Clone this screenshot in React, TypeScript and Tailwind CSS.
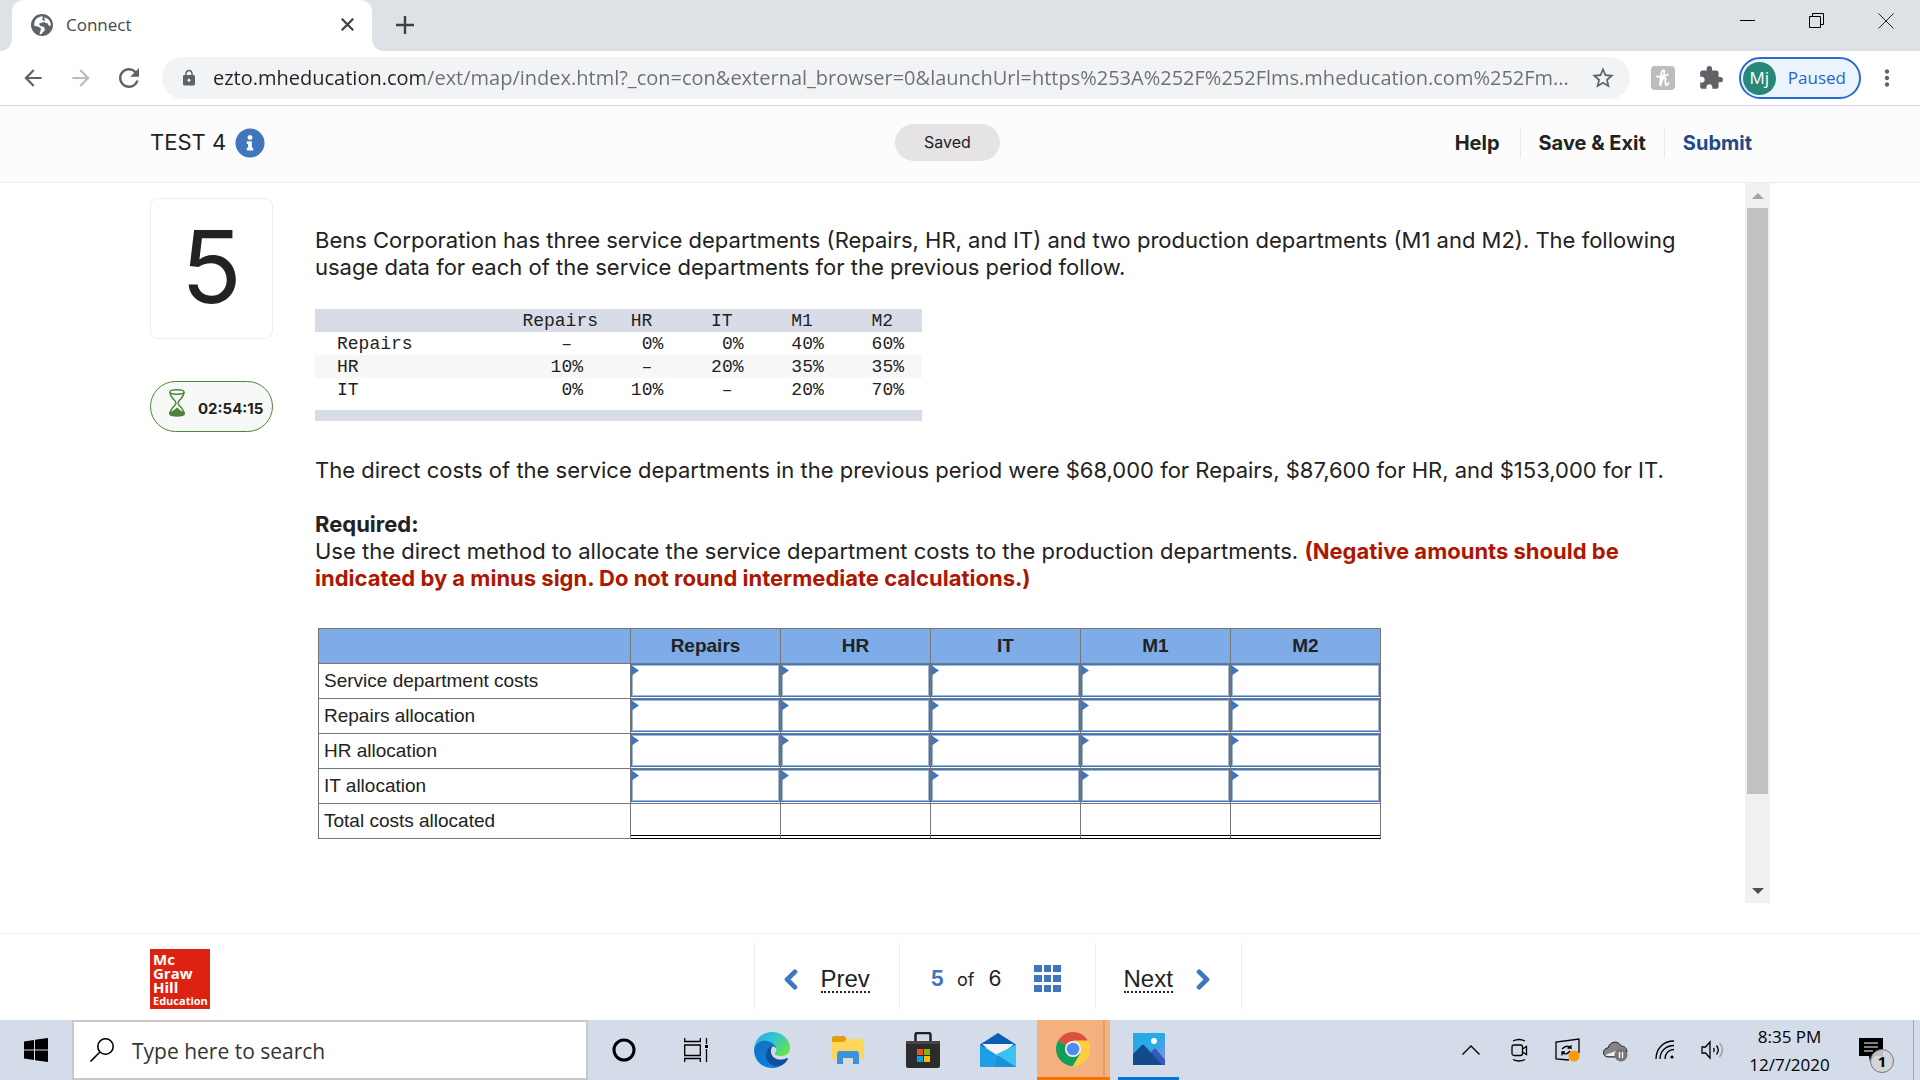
import React from 'react';
import { FaChevronLeft, FaChevronRight, FaInfoCircle } from 'react-icons/fa';
import {
  MdArrowBack,
  MdArrowForward,
  MdExtension,
  MdLock,
  MdMoreVert,
  MdRefresh,
  MdStarBorder,
} from 'react-icons/md';

const URL_TEXT =
  'ezto.mheducation.com/ext/map/index.html?_con=con&external_browser=0&launchUrl=https%253A%252F%252Flms.mheducation.com%252Fm...';

const DEPARTMENTS = ['Repairs', 'HR', 'IT', 'M1', 'M2'];

const USAGE = [
  { name: 'Repairs', values: ['–', '0%', '0%', '40%', '60%'] },
  { name: 'HR', values: ['10%', '–', '20%', '35%', '35%'] },
  { name: 'IT', values: ['0%', '10%', '–', '20%', '70%'] },
];

const ANSWER_ROWS = ['Service department costs', 'Repairs allocation', 'HR allocation', 'IT allocation'];

const TabStrip: React.FC = () => (
  <div className="flex h-[51px] items-stretch bg-[#dee1e6]">
    <div className="w-3 bg-white">
      <div className="h-full rounded-br-xl bg-[#dee1e6]" />
    </div>
    <div className="bg-[#dee1e6]">
      <div className="flex h-full w-[360px] items-center rounded-t-xl bg-white pr-[18px] pb-[2px] pl-[19px]">
        <svg className="h-[22px] w-[22px]" viewBox="0 0 22 22">
          <circle cx="11" cy="11" r="11" fill="#5f6368" />
          <path
            d="M12 2.5C8 2 4.500 4.500 3.500 8L3 11.500l5 1.500 2 1.500-.5 2.500-1 3 2 .3c1-2.500 3-2.600 3.500-4.800l-1-2.500-4-1.200-1-2 2-1 3-.5-.5-2-1.500-.8z"
            fill="#fff"
          />
          <path d="M12.500 3.200l1.500 2-1 2.300 1.500 1.500 2 .3 1.500 2.700 1.800-.4c.4-3.700-2.300-7.800-7.300-8.400z" fill="#fff" />
        </svg>
        <span className="ml-[13px] flex-1 font-['Open_Sans','Noto_Sans',sans-serif] text-[17px] text-[#45494d]">Connect</span>
        <button aria-label="Close tab">
          <svg className="h-[13px] w-[13px]" viewBox="0 0 13 13" stroke="#3c4043" strokeWidth="2.200">
            <path d="M.8.8l11.400 11.400M12.200.8L.8 12.200" />
          </svg>
        </button>
      </div>
    </div>
    <div className="flex flex-1 bg-white">
      <div className="flex flex-1 items-center justify-between rounded-bl-xl bg-[#dee1e6] pb-[2px]">
        <button aria-label="New tab" className="ml-6">
          <svg className="h-[18px] w-[18px]" viewBox="0 0 18 18" stroke="#3c4043" strokeWidth="2.4">
            <path d="M9 0v18M0 9h18" />
          </svg>
        </button>
        <div className="mr-[26px] mb-2 flex items-center gap-[53px]">
          <button aria-label="Minimize">
            <svg className="h-4 w-4" viewBox="0 0 16 16">
              <path d="M0 7.500h15" stroke="#000" />
            </svg>
          </button>
          <button aria-label="Restore">
            <svg className="h-4 w-4" viewBox="0 0 16 16" fill="none" stroke="#000">
              <path d="M.5 3.500h11v11H.5zM3.500 3.500v-3h11v11h-3" />
            </svg>
          </button>
          <button aria-label="Close window">
            <svg className="h-4 w-4" viewBox="0 0 16 16" stroke="#222">
              <path d="M.5.5l15 15M15.500.5l-15 15" />
            </svg>
          </button>
        </div>
      </div>
    </div>
  </div>
);

const AddressBar: React.FC = () => (
  <div className="flex h-[55px] items-center border-b border-[#d5d7da] bg-white pr-[20px] pl-[20px] text-[#5f6368]">
    <button aria-label="Back" className="mr-[22px]">
      <MdArrowBack className="h-[26px] w-[26px]" />
    </button>
    <button aria-label="Forward" className="mr-[20px] text-[#babcbe]">
      <MdArrowForward className="h-[26px] w-[26px]" />
    </button>
    <button aria-label="Reload" className="mr-[18px]">
      <MdRefresh className="h-[30px] w-[30px]" />
    </button>
    <label className="flex h-[42px] flex-1 items-center rounded-full bg-[#f1f3f4] pr-[14px] pl-[18px]">
      <MdLock className="h-[18px] w-[18px]" />
      <input
        aria-label="Address"
        defaultValue={URL_TEXT}
        className="ml-[15px] flex-1 bg-[linear-gradient(to_right,#202124_211px,#6b6e72_211px)] bg-clip-text font-['Open_Sans','Noto_Sans',sans-serif] text-[20px] text-transparent outline-none"
      />
      <MdStarBorder className="h-[26px] w-[26px]" />
    </label>
    <button
      aria-label="Extension"
      className="ml-[21px] flex h-6 w-6 items-center justify-center rounded bg-[#bdbdbd]"
    >
      <svg className="h-5 w-5" viewBox="0 0 20 20" fill="none" stroke="#fff" strokeWidth="1.800" strokeLinecap="round">
        <path d="M7.500 17.500C8.500 12 11.500 8 11.500 3.500c0-2-2.500-1.500-3 1L7 16M4 8.500c3 .5 8 0 11-2M8 13c.5-2 4-4.500 4.500-2.500.3 2-1 6.500 1 6.500 1.200 0 1.800-1 2-2" />
      </svg>
    </button>
    <button aria-label="Extensions" className="ml-[23px]">
      <MdExtension className="h-[26px] w-[26px]" />
    </button>
    <button className="ml-[15px] flex h-[42px] items-center rounded-full border-2 border-[#2a6bd4] bg-[#ebf3fc] pr-[13px] pl-[2px] font-['Open_Sans','Noto_Sans',sans-serif] text-[17px] text-[#2a62cf]">
      <span className="mr-3 flex h-[33px] w-[33px] items-center justify-center rounded-full bg-[#27887a] text-white">
        Mj
      </span>
      Paused
    </button>
    <button aria-label="Menu" className="ml-[13px]">
      <MdMoreVert className="h-[26px] w-[26px]" />
    </button>
  </div>
);

const AppHeader: React.FC = () => (
  <header className="grid h-[77px] grid-cols-[1fr_auto_1fr] items-center border-b border-[#ececec] bg-[#fcfcfc] px-[150px] pb-[3px]">
    <div className="flex items-center gap-[9px]">
      <h1 className="text-[22px]">TEST 4</h1>
      <button aria-label="Test information">
        <FaInfoCircle className="h-[30px] w-[30px] text-[#3f76bd]" />
      </button>
    </div>
    <span className="mr-[25px] rounded-full bg-[#e5e3e6] px-[29px] py-[7px] text-[16px] leading-[23px]">Saved</span>
    <nav className="flex items-center justify-end pr-[18px] text-[20px] leading-[30px] font-bold">
      <button className="pr-5">Help</button>
      <button className="border-l border-[#e8e8e8] px-[18px]">Save &amp; Exit</button>
      <button className="border-l border-[#e8e8e8] pl-[18px] text-[#1c4b87]">Submit</button>
    </nav>
  </header>
);

const QuestionSidebar: React.FC = () => (
  <aside className="w-[123px] shrink-0 pt-[15px]">
    <div className="flex h-[141px] items-center justify-center rounded-lg border border-[#ededed] pb-1 text-[100px]">5</div>
    <div className="mt-[42px] flex h-[51px] items-center rounded-full border border-[#4f8339] bg-[#f7f9f6] pl-[18px]">
      <svg className="mt-[7px] h-[28px] w-4 self-start" viewBox="0 0 16 28" fill="none" stroke="#4f8339" strokeWidth="1.500">
        <ellipse cx="8" cy="3" rx="7" ry="2.200" />
        <path d="M1 3c0 6 6 8 6 11s-6 5-6 11M15 3c0 6-6 8-6 11s6 5 6 11" />
        <path d="M1 23.500c3-.5 5-2 7-4 2 2 4 3.500 7 4v2c-2 2-12 2-14 0z" fill="#4f8339" />
      </svg>
      <span className="mt-[6px] ml-[13px] text-[15px] font-bold">02:54:15</span>
    </div>
  </aside>
);

const UsageTable: React.FC = () => (
  <div className="mt-7 w-[607px] font-['Liberation_Mono',monospace] text-[18px] leading-[21px]">
    <table className="w-full table-fixed border-collapse">
      <thead>
        <tr className="bg-[#d8dce7]">
          <th aria-label="Department" className="w-[200px]" />
          {DEPARTMENTS.map((name) => (
            <th
              key={name}
              className={`p-0 pt-[2px] text-right font-normal ${name === 'Repairs' ? 'w-[86px] pr-[3px]' : 'pr-[29px]'}`}
            >
              {name}
            </th>
          ))}
        </tr>
      </thead>
      <tbody>
        {USAGE.map((row) => (
          <tr key={row.name} className="even:bg-[#f7f7f7]">
            <th className="p-0 pt-[2px] pl-[22px] text-left font-normal">{row.name}</th>
            {row.values.map((value, i) => (
              <td key={i} className={`p-0 pt-[2px] text-right ${value === '–' ? 'pr-[29px]' : 'pr-[18px]'}`}>
                {value}
              </td>
            ))}
          </tr>
        ))}
      </tbody>
    </table>
    <div className="mt-[9px] h-[11px] bg-[#d8dce7]" />
  </div>
);

const AnswerTable: React.FC = () => (
  <table className="mt-9 ml-[3px] table-fixed border-collapse font-['Liberation_Sans',Arial,sans-serif] text-[19px] leading-[23px]">
    <thead>
      <tr className="h-[35px] bg-[#7dace8]">
        <th aria-label="Line item" className="w-[312px] border border-[#767676]" />
        {DEPARTMENTS.map((name) => (
          <th key={name} className="w-[150px] border border-[#767676] p-0 pb-[2px] font-bold">
            {name}
          </th>
        ))}
      </tr>
    </thead>
    <tbody>
      {ANSWER_ROWS.map((label) => (
        <tr key={label} className="h-[35px]">
          <th className="border border-[#767676] p-0 pb-[2px] pl-[5px] text-left font-normal">{label}</th>
          {DEPARTMENTS.map((name) => (
            <td key={name} className="border border-[#767676] p-0">
              <div className="relative mb-px h-[33px]">
                <input
                  aria-label={`${label}, ${name}`}
                  className="block h-full w-full border border-[#3f76bd] bg-white px-2 text-right ring-1 ring-[#9bb9df] outline-none ring-inset"
                />
                <svg className="absolute top-px left-0 h-[11px] w-[8px]" viewBox="0 0 8 11">
                  <path d="M0 0l8 5.500L0 11z" fill="#3f76bd" />
                </svg>
              </div>
            </td>
          ))}
        </tr>
      ))}
      <tr className="h-[35px]">
        <th className="border border-[#767676] p-0 pb-[2px] pl-[5px] text-left font-normal">Total costs allocated</th>
        {DEPARTMENTS.map((name) => (
          <td key={name} className="border border-t-black border-r-[#767676] border-b-black border-l-[#767676] p-0">
            <div className="mb-[2px] h-[32px] border-b border-black" />
          </td>
        ))}
      </tr>
    </tbody>
  </table>
);

const ScrollBar: React.FC = () => (
  <div className="flex w-[25px] shrink-0 flex-col bg-[#f1f1f1]">
    <button aria-label="Scroll up" className="flex h-[25px] items-center justify-center">
      <svg className="h-[6px] w-3" viewBox="0 0 12 6">
        <path d="M6 0l6 6H0z" fill="#a3a3a3" />
      </svg>
    </button>
    <div className="flex-1 px-[2px]">
      <div className="h-7/8 bg-[#c1c1c1]" />
    </div>
    <button aria-label="Scroll down" className="flex h-[25px] items-center justify-center">
      <svg className="h-[6px] w-3" viewBox="0 0 12 6">
        <path d="M0 0h12L6 6z" fill="#505050" />
      </svg>
    </button>
  </div>
);

const Question: React.FC = () => (
  <main className="mb-[30px] flex flex-1 px-[150px]">
    <QuestionSidebar />
    <section className="ml-[42px] flex-1 pt-[44px] text-[22px] leading-[27px]">
      <p className="pr-7">
        Bens Corporation has three service departments (Repairs, HR, and IT) and two production departments (M1 and M2). The
        following usage data for each of the service departments for the previous period follow.
      </p>
      <UsageTable />
      <p className="mt-9 pr-7">
        The direct costs of the service departments in the previous period were $68,000 for Repairs, $87,600 for HR, and
        $153,000 for IT.
      </p>
      <h2 className="mt-[27px] font-bold">Required:</h2>
      <p className="pr-7">
        Use the direct method to allocate the service department costs to the production departments.{' '}
        <strong className="font-bold text-[#ad1700]">
          (Negative amounts should be indicated by a minus sign. Do not round intermediate calculations.)
        </strong>
      </p>
      <AnswerTable />
    </section>
    <ScrollBar />
  </main>
);

const AppFooter: React.FC = () => (
  <footer className="grid h-[87px] grid-cols-[1fr_auto_1fr] items-center border-t border-[#efefef] px-[150px]">
    <div className="mt-1 flex h-[60px] w-[60px] flex-col bg-[#dc2210] pt-[3px] pl-[3px] font-['Open_Sans',sans-serif] text-[15px] leading-[14px] font-bold text-white">
      <span>Mc</span>
      <span>Graw</span>
      <span>Hill</span>
      <span className="text-[11px]">Education</span>
    </div>
    <div className="mb-[2px] ml-[75px] flex h-[66px] items-stretch divide-x divide-[#ededed] border-x border-[#ededed] font-['Liberation_Sans',Arial,sans-serif] text-[24px]">
      <a href="#prev" className="flex w-[145px] items-center pt-[7px] pl-[27px]">
        <FaChevronLeft className="h-[23px] w-[18px] text-[#3f76bd]" stroke="currentColor" strokeWidth="24" />
        <span className="ml-[21px] border-b-2 border-dotted border-[#222] leading-[24px]">Prev</span>
      </a>
      <div className="flex w-[196px] items-center pt-[6px] pl-[31px] font-['Inter',sans-serif] text-[21px]">
        <span className="font-bold text-[#3f76bd]">5</span>
        <span className="ml-[13px] text-[18px]">of</span>
        <span className="ml-[14px]">6</span>
        <button aria-label="Question list" className="mb-[2px] ml-[33px]">
          <svg className="h-[27px] w-[27px]" viewBox="0 0 27 27" fill="#3f76bd">
            <path d="M0 0h8v7H0zM10 0h7v7h-7zM19 0h8v7h-8zM0 10h8v7H0zM10 10h7v7h-7zM19 10h8v7h-8zM0 20h8v7H0zM10 20h7v7h-7zM19 20h8v7h-8z" />
          </svg>
        </button>
      </div>
      <a href="#next" className="flex w-[145px] items-center pt-[7px] pl-[28px]">
        <span className="border-b-2 border-dotted border-[#222] leading-[24px]">Next</span>
        <FaChevronRight className="ml-[21px] h-[23px] w-[18px] text-[#3f76bd]" stroke="currentColor" strokeWidth="24" />
      </a>
    </div>
  </footer>
);

const TaskbarApps: React.FC = () => (
  <div className="flex items-stretch">
    <button aria-label="Cortana" className="flex w-[72px] items-center justify-center">
      <svg className="h-6 w-6" viewBox="0 0 24 24">
        <circle cx="12" cy="12" r="10" fill="none" stroke="#000" strokeWidth="3" />
      </svg>
    </button>
    <button aria-label="Task view" className="flex w-[72px] items-center justify-center">
      <svg className="h-6 w-6" viewBox="0 0 24 24" fill="none" stroke="#000" strokeWidth="1.300">
        <path d="M.7 0v3.500h15.600V0M.7 7h15.600v10.500H.7zM.7 24v-3.500h15.600V24M22.500 0v6M22.500 11v13" />
        <path d="M21 7h3v3h-3z" fill="#000" stroke="none" />
      </svg>
    </button>
    <button aria-label="Edge" className="flex w-20 items-center justify-center">
      <svg className="h-9 w-9" viewBox="0 0 36 36">
        <defs>
          <linearGradient id="edgeTop" x1="0" y1="0" x2="1" y2="0.600">
            <stop offset="0" stopColor="#2aa4ea" />
            <stop offset="0.500" stopColor="#2fc5d6" />
            <stop offset="1" stopColor="#63e04f" />
          </linearGradient>
          <linearGradient id="edgeSide" x1="0" y1="0" x2="0.600" y2="1">
            <stop offset="0" stopColor="#1470c4" />
            <stop offset="1" stopColor="#0a80dc" />
          </linearGradient>
        </defs>
        <path d="M0 17C1 7 8 0 18 0c11 0 18 8 18 16 0 5-4 8-9 8-4 0-7-1-6-3 3-3 1-8-5-10C9 9 2 12 0 17z" fill="url(#edgeTop)" />
        <path d="M0 18C1 11 8 8 13 9c6 1 9 5 9 7-4-4-9 0-9 6 0 7 6 13 13 12-3 2-6 2-8 2C8 36 0 28 0 18z" fill="url(#edgeSide)" />
        <path d="M14 17c-6 9 2 19 12 17 4-1 7-5 8-7 0-1-1-1-1-1-8 4-17 0-16-8 0-2 1-3 2-4-2 0-4 1-5 3z" fill="#124f9a" />
      </svg>
    </button>
    <button aria-label="File Explorer" className="flex w-[72px] items-center justify-center">
      <svg className="h-7 w-8" viewBox="0 0 32 28">
        <path d="M0 1.500Q0 0 2 0h10l3 3-3 4H0z" fill="#e0a00c" />
        <path d="M0 6h12l3-3h17v20H0z" fill="#ffd65c" />
        <path d="M5 28V18q0-3 3-3h16q3 0 3 3v10h-6v-6H11v6z" fill="#3a93dc" />
      </svg>
    </button>
    <button aria-label="Microsoft Store" className="flex w-[78px] items-center justify-center">
      <svg className="h-9 w-9" viewBox="0 0 36 36">
        <path d="M10.500 12V3q0-2 2-2h11q2 0 2 2v9" fill="none" stroke="#222" strokeWidth="2.500" />
        <path d="M1 9h34v25q0 2-2 2H3q-2 0-2-2z" fill="#2c2c2c" />
        <path d="M1 9h34v3H1z" fill="#444" />
        <path d="M12 17h6v6h-6z" fill="#f25022" />
        <path d="M19 17h6v6h-6z" fill="#7fba00" />
        <path d="M12 24h6v6h-6z" fill="#00a4ef" />
        <path d="M19 24h6v6h-6z" fill="#ffb900" />
      </svg>
    </button>
    <button aria-label="Mail" className="flex w-[72px] items-center justify-center">
      <svg className="h-[34px] w-9" viewBox="0 0 36 34">
        <path d="M0 11.500L18 0l18 11.500-3 3H3z" fill="#0a5fb4" />
        <path d="M2 11h32L18 24z" fill="#f4f4f6" />
        <path d="M0 11.500L36 34H1q-1 0-1-1z" fill="#1c9fe6" />
        <path d="M36 11.500V33q0 1-1 1L16 21.500z" fill="#38c3f2" />
        <path d="M0 34V20l18 3 17 11z" fill="#1c9fe6" />
        <path d="M18 22.500L36 34H14z" fill="#1b90dc" />
      </svg>
    </button>
    <button
      aria-label="Chrome"
      className="ml-[3px] flex w-[73px] items-center border-b-[3px] border-[#f97200] bg-[linear-gradient(to_right,#f5b17d_66px,#df9d6e_66px,#df9d6e_68px,#f5b17d_68px)] pl-[19px]"
    >
      <svg className="h-[34px] w-[34px]" viewBox="0 0 34 34">
        <circle cx="17" cy="17" r="17" fill="#ffcd40" />
        <path d="M17 17L2.300 8.500A17 17 0 0 0 17 34l8-13z" fill="#139f5b" />
        <path d="M17 17L2.300 8.500a17 17 0 0 1 29.400 0z" fill="#db4f43" />
        <path d="M17 8.500h14.700A17 17 0 0 1 17 34l7.500-13z" fill="#ffcd40" />
        <circle cx="17" cy="17" r="8" fill="#f4f4f4" />
        <circle cx="17" cy="17" r="6.300" fill="#4c8bf5" />
      </svg>
    </button>
    <button
      aria-label="Photos"
      className="ml-2 flex w-[61px] items-center justify-center border-b-[3px] border-[#0078d7]"
    >
      <svg className="h-8 w-8" viewBox="0 0 32 32">
        <defs>
          <linearGradient id="photoSky" x1="0" y1="0" x2="1" y2="1">
            <stop offset="0.500" stopColor="#29a9e8" />
            <stop offset="1" stopColor="#9a86dc" />
          </linearGradient>
        </defs>
        <rect width="32" height="32" rx="1" fill="url(#photoSky)" />
        <path d="M17 20l4-4q1-1 2 0l9 11v5H20z" fill="#3358c0" />
        <path d="M0 21l9-9q1-1 2 0l18 20H0z" fill="#134a8a" />
        <circle cx="21" cy="8" r="3" fill="#fff" />
      </svg>
    </button>
  </div>
);

const SystemTray: React.FC = () => (
  <div className="ml-auto flex items-center">
    <button aria-label="Show hidden icons" className="mr-[31px]">
      <svg className="h-3 w-[18px]" viewBox="0 0 18 12" fill="none" stroke="#000" strokeWidth="1.400">
        <path d="M.5 10.500L9 2l8.500 8.500" />
      </svg>
    </button>
    <button aria-label="Meet now" className="mr-[26px]">
      <svg className="h-6 w-[18px]" viewBox="0 0 18 24" fill="none" stroke="#000" strokeWidth="1.300">
        <rect x="1" y="7" width="10.500" height="10.500" rx="2" />
        <path d="M11.500 11l4-2.500v8l-4-2.500M2 3q6-3 12 0M2 21.500q6 3 12 0" />
      </svg>
    </button>
    <button aria-label="Windows Update" className="mr-[23px]">
      <svg className="h-6 w-[25px]" viewBox="0 0 25 24" fill="none" stroke="#000" strokeWidth="1.300">
        <path d="M14 22L1 21V4l23-3v14M7 11q5-5 9-1v-3M16 10h-3.500M15 13q-4 5-8 1.500v3M7 14h3" />
        <circle cx="19" cy="18" r="5.500" fill="#ff9800" stroke="none" />
      </svg>
    </button>
    <button aria-label="OneDrive" className="mr-[27px]">
      <svg className="h-6 w-[25px]" viewBox="0 0 25 24">
        <path d="M5 19a4.500 4.500 0 0 1 0-9C7 3 15 2 18 8c4 0 6 3 6 6l-9 5z" fill="#858585" stroke="#222" />
        <path d="M2 17l11-4 3 5H5q-2 0-3-1z" fill="#f0f0f0" />
        <circle cx="18" cy="17" r="6.500" fill="#777" />
        <path d="M16.500 14v6M19.500 14v6" stroke="#fff" strokeWidth="1.300" />
      </svg>
    </button>
    <button aria-label="Network" className="mr-[26px]">
      <svg className="h-5 w-5" viewBox="0 0 20 20" fill="none" stroke="#000" strokeWidth="1.300">
        <path d="M1 19C1 9 8 1 19 1M5 19C5 11 11 5.500 19 5.500M10 19c0-6 4-9.500 9-9.500" />
        <circle cx="17" cy="17" r="1.600" fill="#000" stroke="none" />
      </svg>
    </button>
    <button aria-label="Volume" className="mr-6">
      <svg className="h-5 w-[23px]" viewBox="0 0 23 20" fill="none" stroke="#000" strokeWidth="1.300">
        <path d="M1 7h3.500L9 2v16l-4.500-5H1zM12.500 8q1.500 2 0 4M15.500 5.500q3.500 4.500 0 9" />
        <path d="M18.500 3q6 7 0 14" stroke="#999" />
      </svg>
    </button>
    <div className="w-[83px] pt-px text-center font-['Open_Sans','Noto_Sans',sans-serif] text-[17px] leading-[28px] text-black">
      <div>8:35 PM</div>
      <div>12/7/2020</div>
    </div>
    <button aria-label="Notifications" className="relative ml-[28px]">
      <svg className="h-6 w-6" viewBox="0 0 24 24">
        <path d="M0 0h24v18h-8l-5 6-1-6H0z" fill="#000" />
        <path d="M5 5h14M5 9h14M5 13h9" stroke="#fff" strokeWidth="1.200" />
      </svg>
      <span className="absolute top-[11px] left-[11px] flex h-6 w-6 items-center justify-center rounded-full border border-[#777] bg-[#d4d4d4]/90 font-['Open_Sans',sans-serif] text-[15px] font-bold text-black">
        1
      </span>
    </button>
    <div className="mr-[6px] ml-[30px] h-[60px] w-px bg-[#a0a6b4]" />
  </div>
);

const Taskbar: React.FC = () => (
  <div className="flex h-[60px] items-stretch bg-[#d4dbe9]">
    <button aria-label="Start" className="flex w-[72px] items-center justify-center">
      <svg className="h-6 w-6" viewBox="0 0 24 24">
        <path d="M0 3.500l10-1.500v9.500H0zM11 1.800L24 0v11.500H11zM0 12.500h10V22L0 20.500zM11 12.500h13V24l-13-1.800z" />
      </svg>
    </button>
    <label className="flex w-[516px] items-center border-2 border-[#c9c9c9] bg-white pl-4">
      <svg className="h-6 w-6" viewBox="0 0 24 24" fill="none" stroke="#000" strokeWidth="1.600">
        <circle cx="15.500" cy="8.500" r="7.700" />
        <path d="M10 14L.5 23.500" />
      </svg>
      <input
        aria-label="Search"
        placeholder="Type here to search"
        className="ml-[18px] flex-1 pt-1 font-['Open_Sans','Noto_Sans',sans-serif] text-[21px] outline-none placeholder:text-[#333]"
      />
    </label>
    <TaskbarApps />
    <SystemTray />
  </div>
);

const App: React.FC = () => {
  return (
    <div className="flex min-h-screen flex-col bg-white font-['Inter',sans-serif] text-[#222]">
      <TabStrip />
      <AddressBar />
      <AppHeader />
      <Question />
      <AppFooter />
      <Taskbar />
    </div>
  );
};

export default App;
